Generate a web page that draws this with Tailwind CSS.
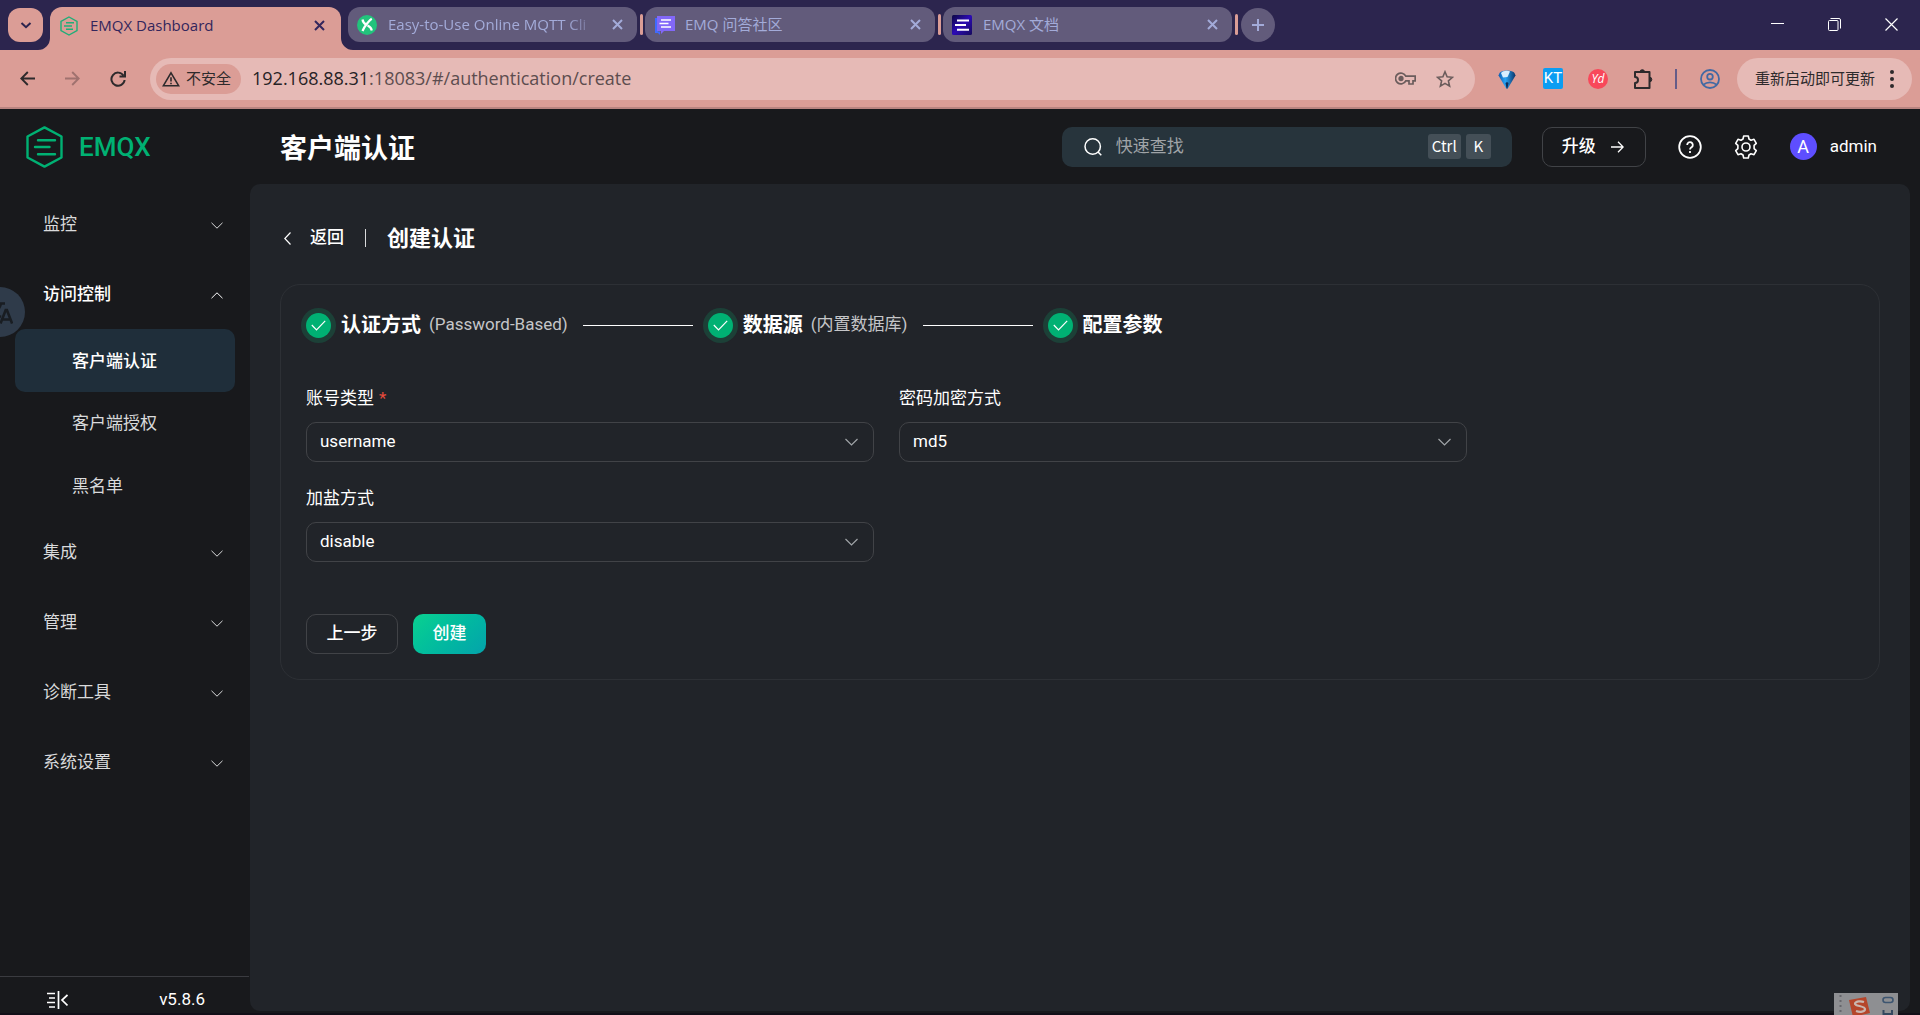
<!DOCTYPE html>
<html lang="zh-CN">
<head>
  <meta charset="UTF-8" />
  <meta name="viewport" content="width=device-width, initial-scale=1.0"/>
  <title>EMQX Dashboard</title>
  <script src="https://cdn.jsdelivr.net/npm/@tailwindcss/browser@4"></script>
</head>
<body class="flex h-screen flex-col overflow-hidden bg-[#18191c] font-[Roboto,'Noto_Sans_CJK_SC',sans-serif] text-[17px] text-white">

  <!-- Browser chrome -->
  <div class="font-['Open_Sans','Noto_Sans_CJK_SC',sans-serif] text-[15px]">
    <!-- Tab strip -->
    <div class="flex h-[50px] items-start bg-[#2c254e] pl-2 pt-[7px] text-[#a3abd9]">
      <button aria-label="搜索标签页" class="mt-px mr-[7px] flex h-[34px] w-[35px] items-center justify-center rounded-xl bg-[#db9d96] text-[#2c254e]">
        <svg class="size-3" viewBox="0 0 12 12" fill="none" stroke="currentColor" stroke-width="2"><path d="M1.5 4 6 8.2 10.500 4"/></svg>
      </button>
      <div class="relative mr-[7px] flex h-[43px] w-[291px] items-center rounded-t-xl bg-[#db9d96] pb-[6px] pl-[10px] pr-4 text-[#33265c]">
        <svg class="absolute -left-3 bottom-0 size-3" viewBox="0 0 12 12" fill="#db9d96"><path d="M12 0v12H0A12 12 0 0 0 12 0z"/></svg>
        <svg class="absolute -right-3 bottom-0 size-3" viewBox="0 0 12 12" fill="#db9d96"><path d="M0 0v12h12A12 12 0 0 1 0 0z"/></svg>
        <svg class="mr-3 h-5 w-[18px]" viewBox="0 0 18 20" fill="none" stroke="#1fae78" stroke-width="1.400"><path d="M9 1 17 5.500v9L9 19 1 14.500v-9z"/><path d="M6 6.800h8M4 10h8M6 13.200h7"/></svg>
        <a href="#" class="flex-1">EMQX Dashboard</a>
        <button aria-label="关闭"><svg class="size-[11px]" viewBox="0 0 11 11" stroke="currentColor" stroke-width="2"><path d="m1 1 9 9M10 1l-9 9"/></svg></button>
      </div>
      <div class="flex h-[35px] w-[289px] items-center rounded-xl bg-[#625b7b] pl-[9px] pr-[14px]">
        <svg class="mr-[11px] size-5" viewBox="0 0 20 20"><circle cx="10" cy="10" r="10" fill="#22c37c"/><path d="M5.500 4.500c.3 2.500 1.500 4 4 5.200M14.800 3.800c-2 1-7.500 7.500-9.300 12.200M14.800 15.500c-.5-2.500-1.700-4-4.300-5" fill="none" stroke="#fff" stroke-width="2.200"/></svg>
        <a href="#" class="w-[210px] whitespace-nowrap mask-r-from-85%">Easy-to-Use Online MQTT Cli</a>
        <button aria-label="关闭" class="ml-auto"><svg class="size-[11px]" viewBox="0 0 11 11" stroke="currentColor" stroke-width="2"><path d="m1 1 9 9M10 1l-9 9"/></svg></button>
      </div>
      <div class="ml-[3px] mr-[2px] mt-[7px] h-[21px] w-[3px] rounded-full bg-[#db9d96]"></div>
      <div class="flex h-[35px] w-[290px] items-center rounded-xl bg-[#625b7b] pl-[10px] pr-[14px]">
        <svg class="mr-[10px] size-5" viewBox="0 0 20 20"><path d="M0 3h3v13.500H5V20l-2-2H0z" fill="#3f6bff"/><path d="M2 1h18v15H9l-3 3v-3H2z" fill="#8268f8"/><path d="M6 5h10M4.500 8.500h9M6 12h10" stroke="#fff" stroke-width="1.500"/></svg>
        <a href="#" class="flex-1">EMQ 问答社区</a>
        <button aria-label="关闭"><svg class="size-[11px]" viewBox="0 0 11 11" stroke="currentColor" stroke-width="2"><path d="m1 1 9 9M10 1l-9 9"/></svg></button>
      </div>
      <div class="ml-[3px] mr-[2px] mt-[7px] h-[21px] w-[3px] rounded-full bg-[#db9d96]"></div>
      <div class="flex h-[35px] w-[289px] items-center rounded-xl bg-[#625b7b] pl-[9px] pr-[14px]">
        <svg class="mr-[11px] size-5" viewBox="0 0 20 20"><defs><linearGradient id="docs" x1="0" y1="0" x2="1" y2="1"><stop offset="0" stop-color="#0c0742"/><stop offset=".5" stop-color="#2c0bb5"/><stop offset="1" stop-color="#160a5c"/></linearGradient></defs><rect width="20" height="20" rx="1.500" fill="url(#docs)"/><path d="M5 5.500h12M3 10h11M5 14.800h12" stroke="#fff" stroke-width="2"/></svg>
        <a href="#" class="flex-1">EMQX 文档</a>
        <button aria-label="关闭"><svg class="size-[11px]" viewBox="0 0 11 11" stroke="currentColor" stroke-width="2"><path d="m1 1 9 9M10 1l-9 9"/></svg></button>
      </div>
      <div class="mx-[3px] mt-[7px] h-[21px] w-[3px] rounded-full bg-[#db9d96]"></div>
      <button aria-label="新标签页" class="mt-px flex size-[34px] items-center justify-center rounded-full bg-[#625b7b]">
        <svg class="size-3" viewBox="0 0 12 12" stroke="currentColor" stroke-width="2"><path d="M6 0v12M0 6h12"/></svg>
      </button>
      <div class="ml-auto flex h-[34px] items-center gap-11 pr-[22px] text-white">
        <button aria-label="最小化"><svg class="size-[13px]" viewBox="0 0 13 13" stroke="currentColor"><path d="M0 5.500h13"/></svg></button>
        <button aria-label="还原"><svg class="size-[13px]" viewBox="0 0 13 13" fill="none" stroke="currentColor"><rect x=".5" y="2.500" width="9.500" height="10" rx="1"/><path d="M2.500.5H11a1.500 1.500 0 0 1 1.500 1.500v8.500"/></svg></button>
        <button aria-label="关闭窗口"><svg class="size-[13px]" viewBox="0 0 13 13" stroke="currentColor" stroke-width="1.200"><path d="m.5.5 12 12M12.500.5l-12 12"/></svg></button>
      </div>
    </div>

    <!-- Address bar -->
    <div class="flex h-[59px] items-center border-b-2 border-[#b98480] bg-[#db9d96] pr-2 text-[#2d2a2c]">
      <button aria-label="后退" class="ml-5"><svg class="size-[15px]" viewBox="0 0 15 15" fill="none" stroke="currentColor" stroke-width="1.900"><path d="M15 7.500H1.500M7.800 1 1.300 7.500l6.500 6.500"/></svg></button>
      <button aria-label="前进" class="ml-[30px] text-[#a0726f]"><svg class="size-[15px]" viewBox="0 0 15 15" fill="none" stroke="currentColor" stroke-width="1.900"><path d="M0 7.500h13.500M7.200 1l6.500 6.500L7.200 14"/></svg></button>
      <button aria-label="重新加载" class="ml-[30px]"><svg class="size-4" viewBox="0 0 16 16" fill="none" stroke="currentColor" stroke-width="2"><path d="M13.500 4.500A6.600 6.600 0 1 0 14.600 9M15 0v5.500H9.500"/></svg></button>
      <div class="ml-6 flex h-[42px] flex-1 items-center rounded-full bg-[#e6bab6] pl-[6px] pr-[21px]">
        <button class="flex h-[30px] w-[85px] items-center gap-[6px] rounded-full bg-[#db9d96] pl-[6px]">
          <svg class="size-[18px]" viewBox="0 0 18 16" fill="none" stroke="currentColor" stroke-width="1.600"><path d="M9 1.800 16.600 14.700H1.400zM9 6.200v4.300M9 11.700v1.600"/></svg>
          <span>不安全</span>
        </button>
        <a href="#" class="ml-[11px] flex-1 text-[18px] text-[#5d4d4f]"><span class="text-[#262225]">192.168.88.31</span>:18083/#/authentication/create</a>
        <button aria-label="密码" class="mr-5 text-[#6b5c5c]"><svg class="h-[13px] w-[21px]" viewBox="0 0 21 13" fill="none" stroke="currentColor" stroke-width="1.700"><path d="M10.800 4.200A5.400 5.400 0 1 0 10.800 8.800H14V12h4V8.800h2.200V4.200z"/><circle cx="6" cy="6.500" r="1.800" fill="currentColor"/></svg></button>
        <button aria-label="收藏" class="text-[#6b5c5c]"><svg class="size-[18px]" viewBox="0 0 18 18" fill="none" stroke="currentColor" stroke-width="1.600"><path d="m9 1.800 2.100 5 5.400.5-4.100 3.600 1.200 5.300L9 13.400l-4.600 2.800 1.200-5.300L1.500 7.300l5.400-.5z"/></svg></button>
      </div>
      <button aria-label="扩展" class="ml-[23px]"><svg class="h-5 w-[18px]" viewBox="0 0 18 20"><defs><linearGradient id="gem" x1="0" y1="0" x2="1" y2="0"><stop offset="0" stop-color="#0d5cb0"/><stop offset=".4" stop-color="#2aa4f4"/><stop offset="1" stop-color="#0a3468"/></linearGradient></defs><path d="M1.500 4C3 .5 15 .5 16.500 4l1 2.500L9.800 19.500H8.200L.5 6.500z" fill="url(#gem)"/><path d="M3 4c2-2.500 7-2.800 9-1.500L9.500 8 5 8.500z" fill="#d9efff"/><path d="m9 13 1.500 1-1 5.500h-1L7.500 14z" fill="#0b2f5e"/></svg></button>
      <button class="ml-[27px] flex h-[21px] w-5 items-center justify-center rounded-xs bg-[#0b9df2] font-[Roboto,sans-serif] text-[15px] text-white">KT</button>
      <button class="ml-[25px] flex size-5 items-center justify-center rounded-full bg-[#f8485a] text-[12px] italic text-white">Yd</button>
      <button aria-label="扩展程序" class="ml-[25px]"><svg class="size-5" viewBox="0 0 20 20" fill="none" stroke="currentColor" stroke-width="2"><path d="M2 8V3h14.500v16H2v-5a3 3 0 0 0 0-6z" stroke-linejoin="round"/><path d="M7 3a2.300 2.300 0 0 1 4.600 0zM16.500 8.200a2.300 2.300 0 0 1 0 4.600z" fill="currentColor" stroke-width="1"/></svg></button>
      <div class="ml-[22px] h-5 w-[2px] bg-[#655c88]"></div>
      <button aria-label="个人资料" class="ml-[23px] text-[#4269a3]"><svg class="size-5" viewBox="0 0 20 20" fill="none" stroke="currentColor" stroke-width="1.800"><circle cx="10" cy="10" r="9"/><circle cx="10" cy="7.700" r="2.800"/><path d="M3.500 15.700c3.500-3.200 9.500-3.200 13 0"/></svg></button>
      <button class="ml-[17px] flex h-[42px] w-[175px] items-center justify-between rounded-full bg-[#e6bab6] pl-[18px] pr-[18px]">
        <span>重新启动即可更新</span>
        <svg class="h-5 w-1" viewBox="0 0 4 20" fill="currentColor"><circle cx="2" cy="3" r="2"/><circle cx="2" cy="10" r="2"/><circle cx="2" cy="17" r="2"/></svg>
      </button>
    </div>
  </div>

  <!-- Dashboard -->
  <div class="relative flex flex-1 border-b-2 border-[#120f18]">
    <aside class="flex w-[250px] flex-col">
      <div class="flex h-[75px] items-center gap-4 pl-[26px] text-[#00b173]">
        <svg class="h-[42px] w-[37px]" viewBox="0 0 37 42" fill="none" stroke="currentColor" stroke-width="2.400" stroke-linecap="round" stroke-linejoin="round"><path d="M18.500 1.400 35.500 10.500v21L18.500 40.600 1.500 31.500v-21z"/><path d="M12 14.300h17M9 21h14.500M12 28.200h17"/></svg>
        <span class="pt-[2px] text-[26px] font-medium">EMQX</span>
      </div>
      <nav class="mt-[5px] flex-1 text-[#d9dadb]">
        <button class="flex h-[70px] w-full items-center justify-between pl-[43px] pr-[27px] pt-[2px]">监控
          <svg class="h-[7px] w-3" viewBox="0 0 12 7" fill="none" stroke="currentColor"><path d="m.5.8 5.500 5.400L11.500.8"/></svg>
        </button>
        <button class="flex h-[70px] w-full items-center justify-between pl-[43px] pr-[27px] pt-[2px] font-medium text-white">访问控制
          <svg class="h-[7px] w-3" viewBox="0 0 12 7" fill="none" stroke="currentColor"><path d="M.5 6.200 6 .8l5.500 5.400"/></svg>
        </button>
        <div class="mx-[15px] grid h-[188px] grid-rows-3">
          <a href="#" class="flex items-center rounded-[10px] bg-[#1f2e3a] pl-[57px] pt-[2px] font-medium text-white">客户端认证</a>
          <a href="#" class="flex items-center pl-[57px] pt-[2px]">客户端授权</a>
          <a href="#" class="flex items-center pl-[57px] pt-[2px]">黑名单</a>
        </div>
        <button class="flex h-[70px] w-full items-center justify-between pl-[43px] pr-[27px] pt-[2px]">集成
          <svg class="h-[7px] w-3" viewBox="0 0 12 7" fill="none" stroke="currentColor"><path d="m.5.8 5.500 5.400L11.500.8"/></svg>
        </button>
        <button class="flex h-[70px] w-full items-center justify-between pl-[43px] pr-[27px] pt-[2px]">管理
          <svg class="h-[7px] w-3" viewBox="0 0 12 7" fill="none" stroke="currentColor"><path d="m.5.8 5.500 5.400L11.500.8"/></svg>
        </button>
        <button class="flex h-[70px] w-full items-center justify-between pl-[43px] pr-[27px] pt-[2px]">诊断工具
          <svg class="h-[7px] w-3" viewBox="0 0 12 7" fill="none" stroke="currentColor"><path d="m.5.8 5.500 5.400L11.500.8"/></svg>
        </button>
        <button class="flex h-[70px] w-full items-center justify-between pl-[43px] pr-[27px] pt-[2px]">系统设置
          <svg class="h-[7px] w-3" viewBox="0 0 12 7" fill="none" stroke="currentColor"><path d="m.5.8 5.500 5.400L11.500.8"/></svg>
        </button>
      </nav>
      <div class="mr-px flex h-[37px] items-center justify-between border-t border-[#3a3b40] pl-[47px] pr-11 pt-[10px]">
        <button aria-label="收起菜单"><svg class="h-[18px] w-[21px]" viewBox="0 0 21 18" fill="none" stroke="currentColor" stroke-width="1.700"><path d="M0 2.500h8M2 7h6M0 11.500h8M2 16h6M11.500 0v18M20.500 4 15 9l5.500 5.500"/></svg></button>
        <span>v5.8.6</span>
      </div>
    </aside>

    <div class="flex flex-1 flex-col pr-[10px] pb-[2px]">
      <header class="flex h-[75px] items-center pl-[30px] pr-[33px]">
        <h1 class="flex-1 pt-[6px] text-[27px] font-bold">客户端认证</h1>
        <label class="flex h-10 w-[450px] items-center rounded-[10px] bg-[#27343c] pl-[22px] pr-[21px]">
          <svg class="mr-[14px] size-[18px]" viewBox="0 0 18 18" fill="none" stroke="currentColor" stroke-width="1.500"><circle cx="8.700" cy="8.500" r="7.700"/><path d="m14 14 3.300 3.300"/></svg>
          <input type="text" aria-label="快速查找" placeholder="快速查找" class="min-w-0 flex-1 outline-none placeholder:text-[#a0a4a8]"/>
          <kbd class="mr-[5px] flex h-[25px] w-[33px] items-center justify-center rounded-[3px] bg-[#444f57] font-['Noto_Sans_CJK_SC',sans-serif] text-[15px]">Ctrl</kbd>
          <kbd class="flex size-[25px] items-center justify-center rounded-[3px] bg-[#444f57] font-['Noto_Sans_CJK_SC',sans-serif] text-[15px]">K</kbd>
        </label>
        <button class="ml-[30px] flex h-10 w-[104px] items-center justify-between rounded-[10px] border border-[#414347] pl-[19px] pr-[21px] font-medium">升级
          <svg class="h-3 w-[13px]" viewBox="0 0 13 12" fill="none" stroke="currentColor" stroke-width="1.300"><path d="M0 6h12M7 .8 12.200 6 7 11.200"/></svg>
        </button>
        <button aria-label="帮助" class="ml-8"><svg class="size-6" viewBox="0 0 24 24" fill="none" stroke="currentColor" stroke-width="1.800"><circle cx="12" cy="12" r="10.800"/><path d="M9.200 10a2.800 2.800 0 1 1 4.400 2.200c-1.100.8-1.600 1.100-1.600 2.400M12 16v2"/></svg></button>
        <button aria-label="设置" class="ml-8"><svg class="size-6" viewBox="0 0 24 24" fill="none" stroke="currentColor" stroke-width="1.600" stroke-linejoin="round"><path d="M9.700 1h4.600l.7 3 2 1.200 3-.9 2.300 4-2.200 2.100v3.200l2.200 2.100-2.300 4-3-.9-2 1.200-.7 3H9.700L9 20l-2-1.200-3 .9-2.300-4 2.200-2.100v-3.200L1.700 8.300l2.300-4 3 .9L9 4z"/><circle cx="12" cy="12" r="4"/></svg></button>
        <button class="ml-8 flex items-center gap-[13px]">
          <span class="flex size-[27px] items-center justify-center rounded-full bg-[#5e4eff] text-[18px]">A</span>admin
        </button>
      </header>

      <main class="flex-1 rounded-[10px] bg-[#212429] px-[30px] pt-[38px]">
        <div class="flex h-8 items-center">
          <a href="#" class="flex items-center gap-[19px] pl-1 font-medium">
            <svg class="h-[13px] w-[7px]" viewBox="0 0 7 13" fill="none" stroke="currentColor" stroke-width="1.200"><path d="M6.500.5.800 6.500l5.700 6"/></svg>返回
          </a>
          <div class="mx-[21px] h-[18px] w-px bg-[#d9dadb]"></div>
          <h2 class="text-[22px] font-bold">创建认证</h2>
        </div>

        <section class="mt-[30px] rounded-[20px] border border-[#2d3035] p-[25px]">
          <ol class="flex h-[30px] items-center">
            <li class="flex items-center">
              <span class="-ml-[5px] mr-[5px] flex size-[35px] items-center justify-center rounded-full bg-[#1c4037]"><span class="flex size-[25px] items-center justify-center rounded-full bg-[#00b173]"><svg class="h-[11px] w-[15px]" viewBox="0 0 15 11" fill="none" stroke="#fff" stroke-width="1.200"><path d="M.8 5 5.500 9.800 14.200.8"/></svg></span></span>
              <strong class="text-[20px]">认证方式</strong><span class="ml-2 text-[#c5c6c8]">(Password-Based)</span>
            </li>
            <li class="flex items-center">
              <span class="mx-[15px] h-px w-[110px] bg-white"></span>
              <span class="-ml-[5px] mr-[5px] flex size-[35px] items-center justify-center rounded-full bg-[#1c4037]"><span class="flex size-[25px] items-center justify-center rounded-full bg-[#00b173]"><svg class="h-[11px] w-[15px]" viewBox="0 0 15 11" fill="none" stroke="#fff" stroke-width="1.200"><path d="M.8 5 5.500 9.800 14.200.8"/></svg></span></span>
              <strong class="text-[20px]">数据源</strong><span class="ml-2 text-[#c5c6c8]">(内置数据库)</span>
            </li>
            <li class="flex items-center">
              <span class="mx-[15px] h-px w-[110px] bg-white"></span>
              <span class="-ml-[5px] mr-[5px] flex size-[35px] items-center justify-center rounded-full bg-[#1c4037]"><span class="flex size-[25px] items-center justify-center rounded-full bg-[#00b173]"><svg class="h-[11px] w-[15px]" viewBox="0 0 15 11" fill="none" stroke="#fff" stroke-width="1.200"><path d="M.8 5 5.500 9.800 14.200.8"/></svg></span></span>
              <strong class="text-[20px]">配置参数</strong>
            </li>
          </ol>

          <form class="mt-[42px]">
            <div class="grid w-3/4 grid-cols-2 gap-x-[25px] gap-y-5">
              <div>
                <label for="account-type" class="flex h-10 items-center gap-[5px] pb-[6px]">账号类型 <span class="text-[#e74b3c]">*</span></label>
                <div class="relative">
                  <select id="account-type" class="h-10 w-full appearance-none rounded-[10px] border border-[#414347] px-[13px]"><option>username</option></select>
                  <svg class="pointer-events-none absolute right-4 top-4 h-[8px] w-[13px] text-[#a0a4a8]" viewBox="0 0 13 8" fill="none" stroke="currentColor" stroke-width="1.200"><path d="m.5 1 6 6 6-6"/></svg>
                </div>
              </div>
              <div>
                <label for="hash-type" class="flex h-10 items-center pb-[6px]">密码加密方式</label>
                <div class="relative">
                  <select id="hash-type" class="h-10 w-full appearance-none rounded-[10px] border border-[#414347] px-[13px]"><option>md5</option></select>
                  <svg class="pointer-events-none absolute right-4 top-4 h-[8px] w-[13px] text-[#a0a4a8]" viewBox="0 0 13 8" fill="none" stroke="currentColor" stroke-width="1.200"><path d="m.5 1 6 6 6-6"/></svg>
                </div>
              </div>
              <div>
                <label for="salt-position" class="flex h-10 items-center pb-[6px]">加盐方式</label>
                <div class="relative">
                  <select id="salt-position" class="h-10 w-full appearance-none rounded-[10px] border border-[#414347] px-[13px]"><option>disable</option></select>
                  <svg class="pointer-events-none absolute right-4 top-4 h-[8px] w-[13px] text-[#a0a4a8]" viewBox="0 0 13 8" fill="none" stroke="currentColor" stroke-width="1.200"><path d="m.5 1 6 6 6-6"/></svg>
                </div>
              </div>
            </div>
            <div class="mt-[52px] flex gap-[15px] font-medium">
              <button type="button" class="h-10 w-[92px] rounded-[10px] border border-[#414347]">上一步</button>
              <button type="button" class="h-10 w-[73px] rounded-[10px] bg-linear-135 from-[#0bd18f] to-[#05a3ab]">创建</button>
            </div>
          </form>
        </section>
      </main>
    </div>

    <!-- Translate bubble -->
    <button aria-label="翻译" class="absolute -left-[25px] top-[178px] flex size-[50px] items-center justify-end rounded-full bg-[#2f3b4a] pr-3 text-[#191d22]">
      <svg class="h-6 w-[27px]" viewBox="0 0 27 24" fill="none" stroke="currentColor" stroke-width="2.600"><path d="M0 3.500h19M9.500 0v3.500M15 3.500C13 10 8 15 1.500 18M5 7c2 4 6 8 10 10M14.500 23.500l5.200-13.500h1.200l5.200 13.500M16.200 19.500h8"/></svg>
    </button>

    <!-- Input method bar -->
    <div class="absolute -bottom-[2px] right-[22px] h-[22px] w-16 overflow-hidden bg-[#8e8f92]">
      <svg class="h-[22px] w-16" viewBox="0 0 64 22" fill="none"><path d="M6.500 2v20" stroke="#66676c" stroke-width="2" stroke-dasharray="2 3"/><path d="m15 7 17-3 4 16-17 4z" fill="#b5452a"/><path d="M30 9c-3-1-8-1-9 1.500S31 13 31 16s-5 3.500-9 2" stroke="#c9b5ae" stroke-width="2.200"/><rect x="49" y="4.500" width="10" height="5" rx="2.500" stroke="#3d5570" stroke-width="1.600"/><path d="M49.500 17v5M58 17v5M49.500 21h9" stroke="#34485f" stroke-width="2"/></svg>
    </div>
  </div>
</body>
</html>
